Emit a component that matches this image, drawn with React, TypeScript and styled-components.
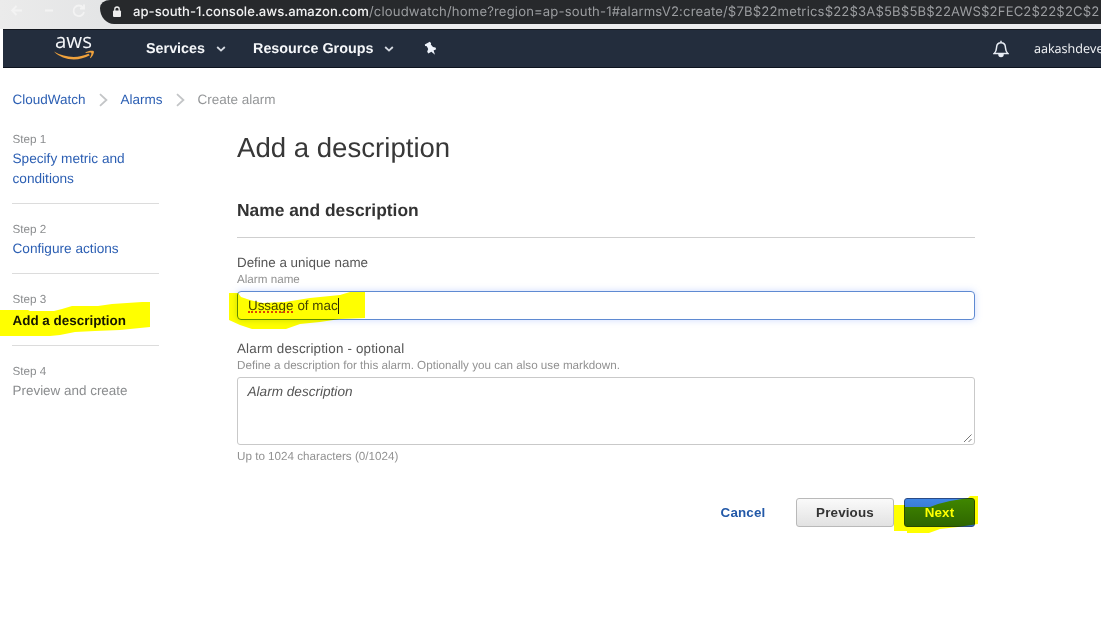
import React from "react";
import styled, { createGlobalStyle } from "styled-components";

const Global = createGlobalStyle`
  * { box-sizing: border-box; }
  html, body { margin: 0; padding: 0; background: #fff; overflow: hidden; }
  body { font-family: "Liberation Sans", Arial, sans-serif; text-rendering: geometricPrecision; }
  svg { flex: none; }
`;

const Page = styled.div`
  position: relative;
  width: 1101px;
  height: 642px;
  overflow: hidden;
  background: #fff;
`;

const BrowserBar = styled.div`
  display: flex;
  height: 29px;
  background: linear-gradient(90deg, #ebebeb 0, #e4e5e6 100px, #ececee 400px);
`;

const BrowserButtons = styled.div`
  width: 100px;
  height: 24px;
  flex: none;
`;

const AddressBar = styled.div`
  display: flex;
  align-items: center;
  flex: 1;
  height: 24px;
  padding-left: 12px;
  background: #27292c;
  border-bottom-left-radius: 14px 16px;
  border-top-left-radius: 10px 8px;
  overflow: hidden;
  white-space: nowrap;
`;

const Url = styled.div`
  margin: -1px 0 0 11px;
  font: 400 13.1px/20px Inter, sans-serif;
  letter-spacing: 0.15px;
  color: #9b9da0;
`;

const Host = styled.span`
  color: #f1f1f2;
  font-weight: 500;
  letter-spacing: 0.02px;
`;

const Nav = styled.nav`
  display: flex;
  align-items: center;
  height: 39px;
  margin-left: 3px;
  padding-left: 50px;
  background: #232d3d;
  border-top: 1px solid #14181f;
  border-bottom: 1px solid #0d131e;
  color: #f4f6f9;
  overflow: hidden;
  white-space: nowrap;
`;

const Logo = styled.div`
  display: flex;
  flex-direction: column;
  align-items: center;
  width: 42px;
  margin-right: 51px;
`;

const LogoWord = styled.div`
  font: 500 20.5px/16px "Open Sans", sans-serif;
  height: 17px;
  margin-top: -4px;
  margin-left: -1px;
`;

const NavItem = styled.div<{ $gap: number }>`
  display: flex;
  align-items: center;
  gap: 11px;
  margin-right: ${(p) => p.$gap}px;
  padding-top: 1px;
  font-size: 14.35px;
  line-height: 20px;
  font-weight: 700;
`;

const NavRight = styled.div`
  display: flex;
  align-items: center;
  gap: 25px;
  width: 108px;
  margin-left: auto;
  font: 400 12.6px/20px "Open Sans", sans-serif;
`;

const Breadcrumbs = styled.div`
  display: flex;
  align-items: center;
  height: 20px;
  margin: 22px 0 22px 12.5px;
  font-size: 13.5px;
  line-height: 20px;
`;

const Crumb = styled.span<{ $current?: boolean }>`
  color: ${(p) => (p.$current ? "#949698" : "#2c5fb3")};
`;

const Body = styled.div`
  display: flex;
  padding-left: 12px;
`;

const Steps = styled.div`
  width: 147px;
  margin-right: 78px;
`;

const Step = styled.div`
  padding-bottom: 14px;
  margin-bottom: 18px;
  border-bottom: 1px solid #dcdcdc;
  &:last-child { border: 0; }
`;

const StepLabel = styled.div`
  padding-left: 0.5px;
  font-size: 11.7px;
  line-height: 16px;
  color: #8b8d8f;
`;

const StepName = styled.div<{ $state: "link" | "active" | "next" }>`
  margin-top: ${(p) => (p.$state === "active" ? 3 : 1)}px;
  padding-left: 0.5px;
  font-size: ${(p) => ({ link: 13.65, active: 13.45, next: 13.45 })[p.$state]}px;
  line-height: 20px;
  font-weight: ${(p) => (p.$state === "active" ? 700 : 400)};
  color: ${(p) => ({ link: "#2c5fb3", active: "#161616", next: "#8b8d8f" })[p.$state]};
`;

const Main = styled.main`
  width: 738px;
  margin-top: -1px;
`;

const Title = styled.h1`
  margin: 0;
  font-size: 27.6px;
  line-height: 34px;
  font-weight: 400;
  color: #383838;
`;

const SectionTitle = styled.h2`
  margin: 33px 0 16px;
  padding-bottom: 15px;
  border-bottom: 1px solid #cfcfcf;
  font-size: 17.4px;
  line-height: 24px;
  font-weight: 700;
  color: #333;
`;

const Label = styled.div<{ $spacing?: number }>`
  font-size: 13.4px;
  line-height: 17px;
  letter-spacing: ${(p) => p.$spacing ?? 0}px;
  color: #555;
`;

const Hint = styled.div`
  padding-top: 1px;
  font-size: 11.67px;
  line-height: 15px;
  color: #919191;
`;

const NameField = styled.div`
  display: flex;
  height: 29px;
  margin: 4px 0 20px;
  padding-left: 10px;
  border: 1px solid #5f8ad2;
  border-radius: 4px;
  box-shadow: 0 0 7px rgba(110, 150, 255, 0.35);
  font-size: 13.4px;
  line-height: 28px;
  color: #444;
`;

const Misspelled = styled.span`
  position: relative;
  margin-right: 4px;
  &::after {
    content: "";
    position: absolute;
    left: 0;
    right: 0;
    top: 19px;
    border-bottom: 2px dotted #e0453a;
  }
`;

const Caret = styled.span`
  width: 1px;
  height: 16px;
  margin-top: 6px;
  background: #222;
`;

const DescriptionField = styled.div`
  display: flex;
  justify-content: space-between;
  height: 68px;
  margin: 4px 0 3px;
  padding: 4px 1px 1px 9.5px;
  border: 1px solid #c9c9c9;
  border-radius: 3px;
  font-size: 13.6px;
  line-height: 20px;
  font-style: italic;
  color: #555;
`;

const Grip = styled.svg`
  align-self: flex-end;
`;

const Actions = styled.div`
  display: flex;
  justify-content: flex-end;
  align-items: center;
  margin-top: 34px;
`;

const Button = styled.button<{ $kind: "link" | "normal" | "primary" }>`
  height: 29px;
  width: ${(p) => ({ link: 46, normal: 98, primary: 71 })[p.$kind]}px;
  margin-left: ${(p) => (p.$kind === "normal" ? 30 : 10)}px;
  padding: 0;
  border: ${(p) => ({ link: "0", normal: "1px solid #b9b9b9", primary: "1px solid #2a4a86" })[p.$kind]};
  border-radius: 3px;
  background: ${(p) =>
    ({
      link: "none",
      normal: "linear-gradient(#fafafa, #e2e2e2)",
      primary: "linear-gradient(#3f86e6, #2f66bd)",
    })[p.$kind]};
  color: ${(p) => ({ link: "#2359a8", normal: "#333", primary: "#fff" })[p.$kind]};
  font: 700 13.4px/20px "Liberation Sans", Arial, sans-serif;
  letter-spacing: 0.15px;
  white-space: nowrap;
`;

const Marker = styled.svg`
  position: absolute;
  left: 0;
  top: 0;
  mix-blend-mode: multiply;
  pointer-events: none;
`;

const Chevron = () => (
  <svg width="10" height="8" viewBox="0 0 10 8" fill="none" stroke="#d5dae2" strokeWidth="1.8">
    <path d="M1.2 2 5 5.6 8.8 2" />
  </svg>
);

const CrumbArrow = () => (
  <svg width="35" height="14" viewBox="0 0 35 14" fill="none" stroke="#c3c5c7" strokeWidth="1.8">
    <path d="M14 1.2 20.4 7 14 12.8" />
  </svg>
);

export default function App() {
  return (
    <Page>
      <Global />
      <BrowserBar>
        <BrowserButtons>
          <svg width="100" height="24" fill="none" stroke="#f3f3f3" strokeWidth="1.800">
            <path d="M22 10.500H12M16.500 6 12 10.500 16.500 15M45 10.500H53M83 7.500A5.300 5.300 0 1 0 84 12M84 4.500V8.500H80" />
          </svg>
        </BrowserButtons>
        <AddressBar>
          <svg width="10" height="12" viewBox="0 0 10 12">
            <rect x="1" y="4.500" width="8" height="6.500" rx="1" fill="#eee" />
            <path d="M2.800 5V3.200a2.200 2.200 0 0 1 4.400 0V5" fill="none" stroke="#eee" strokeWidth="1.300" />
          </svg>
          <Url>
            <Host>ap-south-1.console.aws.amazon.com</Host>
            /cloudwatch/home?region=ap-south-1#alarmsV2:create/$7B$22metrics$22$3A$5B$5B$22AWS$2FEC2$22$2C$2
          </Url>
        </AddressBar>
      </BrowserBar>
      <Nav>
        <Logo>
          <LogoWord>aws</LogoWord>
          <svg width="42" height="11" viewBox="0 0 42 11" fill="#f0a23c">
            <path d="M1 1.500C12 8 25 8.500 35.500 3.800L36.800 5.200C26 11.500 10 11 1 1.500Z" />
            <path d="M32.500 2.300C35 .6 39.500.2 40.600 1.100S40 6 37.600 8.300L37 7.800C38 5.600 38.800 3.400 38.200 2.800S34.500 2.700 32.700 2.900Z" />
          </svg>
        </Logo>
        <NavItem $gap={27}>
          Services <Chevron />
        </NavItem>
        <NavItem $gap={30}>
          Resource Groups <Chevron />
        </NavItem>
        <svg width="13" height="15" viewBox="0 0 13 15" fill="#eef3fb">
          <path d="M.8 3.600 5.800.8 7.100 2.200 6.800 3.600 9 6 11.500 6.400 12.200 8.200 9.600 9.600 11 13.800 7.400 10.800 4.200 12.600 3.200 10.500 4.200 8 2.800 5.200 1.200 5Z" />
        </svg>
        <NavRight>
          <svg width="16" height="18" viewBox="0 0 16 18" fill="none" stroke="#e8edf5" strokeWidth="1.500">
            <path d="M1.200 13.500C3.500 11.500 3.400 9.500 3.600 7 3.800 4 5.500 2.700 8 2.700S12.200 4 12.400 7C12.600 9.500 12.500 11.500 14.800 13.500ZM8 .8V2.700" />
            <path d="M6 14.500H10A2 2 0 0 1 6 14.500Z" fill="#e8edf5" />
          </svg>
          aakashdeve
        </NavRight>
      </Nav>
      <Breadcrumbs>
        <Crumb>CloudWatch</Crumb>
        <CrumbArrow />
        <Crumb>Alarms</Crumb>
        <CrumbArrow />
        <Crumb $current>Create alarm</Crumb>
      </Breadcrumbs>
      <Body>
        <Steps>
          <Step>
            <StepLabel>Step 1</StepLabel>
            <StepName $state="link">Specify metric and conditions</StepName>
          </Step>
          <Step>
            <StepLabel>Step 2</StepLabel>
            <StepName $state="link">Configure actions</StepName>
          </Step>
          <Step>
            <StepLabel>Step 3</StepLabel>
            <StepName $state="active">Add a description</StepName>
          </Step>
          <Step>
            <StepLabel>Step 4</StepLabel>
            <StepName $state="next">Preview and create</StepName>
          </Step>
        </Steps>
        <Main>
          <Title>Add a description</Title>
          <SectionTitle>Name and description</SectionTitle>
          <Label>Define a unique name</Label>
          <Hint>Alarm name</Hint>
          <NameField>
            <Misspelled>Ussage</Misspelled>of mac
            <Caret />
          </NameField>
          <Label $spacing={0.18}>Alarm description - optional</Label>
          <Hint>Define a description for this alarm. Optionally you can also use markdown.</Hint>
          <DescriptionField>
            Alarm description
            <Grip width="10" height="10" viewBox="0 0 10 10" stroke="#777" strokeWidth="1">
              <path d="M1 9 8.500 1.500M5.500 9 8.500 6" />
            </Grip>
          </DescriptionField>
          <Hint>Up to 1024 characters (0/1024)</Hint>
          <Actions>
            <Button $kind="link">Cancel</Button>
            <Button $kind="normal">Previous</Button>
            <Button $kind="primary">Next</Button>
          </Actions>
        </Main>
      </Body>
      <Marker width="1101" height="642" fill="#ffff00">
        <path d="M0 310H28L30 311H54L62 309 72 306H98L112 304 142 302H150V327L120 330 95 331 75 332 60 335 50 336H0Z" />
        <path d="M229 293H238L241 297 250 300 262 303 285 302 310 298 340 295 350 292H365V318L340 319 320 322 300 324 286 329H252L240 325 229 320Z" />
        <path d="M894 505H905V507H930L938 504 950 501 968 498 970 496H978V524L958 527 940 529 929 533H907V531H894Z" />
      </Marker>
    </Page>
  );
}
